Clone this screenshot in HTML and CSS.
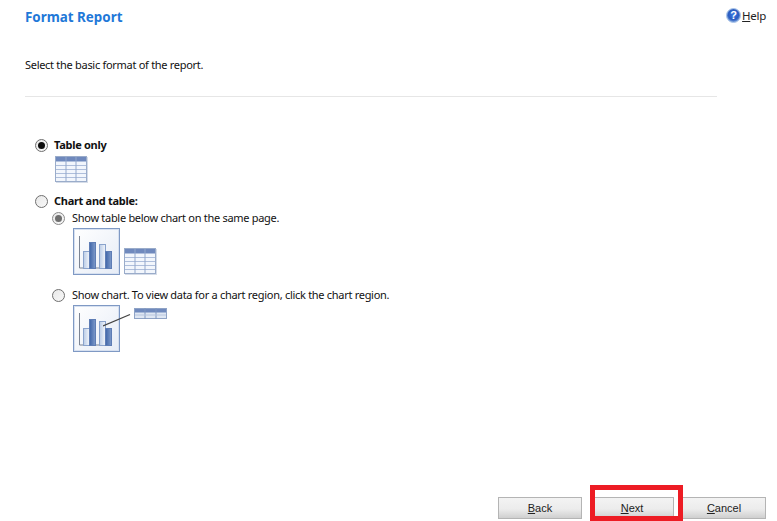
FILE: index.html
```html
<!DOCTYPE html>
<html lang="en">
<head>
<meta charset="utf-8">
<title>Format Report</title>
<link rel="stylesheet" href="styles.css">
</head>
<body>
<div class="page">
  <header class="head">
    <h1 class="title">Format Report</h1>
    <a class="help"><svg class="help-icon" width="15" height="15" viewBox="0 0 15 15"><defs><radialGradient id="hg" cx="50%" cy="45%" r="55%"><stop offset="0" stop-color="#3a78e4"/><stop offset="0.65" stop-color="#2a5cc0"/><stop offset="1" stop-color="#8fb2e2"/></radialGradient></defs><circle cx="7.5" cy="7.5" r="7" fill="url(#hg)" stroke="#a9c4e8"/><text x="7.5" y="11.3" text-anchor="middle" class="help-q">?</text></svg><span><u>H</u>elp</span></a>
  </header>
  <p class="intro">Select the basic format of the report.</p>
  <hr class="rule">
  <div class="options">
    <div class="opt opt-first">
      <label class="row"><span class="radio on"></span><b>Table only</b></label>
      <svg class="pic-table" width="33" height="27" viewBox="0 0 33 27"><use href="#tbl"/></svg>
    </div>
    <div class="opt opt-chart">
      <label class="row"><span class="radio"></span><b>Chart and table:</b></label>
      <div class="sub">
        <label class="row"><span class="radio on gray"></span>Show table below chart on the same page.</label>
        <div class="pics">
          <svg width="47" height="47" viewBox="0 0 47 47"><use href="#chart"/></svg>
          <svg class="pic-side" width="33" height="27" viewBox="0 0 33 27"><use href="#tbl"/></svg>
        </div>
      </div>
      <div class="sub sub-second">
        <label class="row"><span class="radio"></span>Show chart. To view data for a chart region, click the chart region.</label>
        <div class="pics pics-link">
          <svg width="47" height="47" viewBox="0 0 47 47"><use href="#chart"/></svg>
          <svg class="pic-line" width="32" height="24" viewBox="0 0 32 24"><path d="M0 21L27 9.500" stroke="#444" stroke-width="1.300" fill="none"/></svg>
          <svg class="pic-mini" width="33" height="11" viewBox="0 0 33 11"><rect x=".5" y=".5" width="32" height="10" fill="#dfe7f3" stroke="#8fa3c6"/><rect x="1" y="1" width="31" height="3.500" fill="#6f89bd"/><path d="M11 0v11M22 0v11" stroke="#7f96bf"/><path d="M1 7h31" stroke="#b7c5de"/></svg>
        </div>
      </div>
    </div>
  </div>
  <footer class="foot">
    <button class="btn"><u>B</u>ack</button>
    <span class="next-wrap"><button class="btn"><u>N</u>ext</button><span class="mark"></span></span>
    <button class="btn"><u>C</u>ancel</button>
  </footer>
</div>
<svg class="defs" width="0" height="0">
  <defs>
    <linearGradient id="bd" x1="0" x2="1" y1="0" y2="0"><stop offset="0" stop-color="#3f65a8"/><stop offset="1" stop-color="#7f9bca"/></linearGradient>
    <linearGradient id="bl" x1="0" x2="1" y1="0" y2="0"><stop offset="0" stop-color="#b9cbe6"/><stop offset="1" stop-color="#f3f6fb"/></linearGradient>
    <linearGradient id="pg" x1="0" x2="1" y1="0" y2="1"><stop offset="0" stop-color="#ffffff"/><stop offset="1" stop-color="#e6ecf6"/></linearGradient>
    <g id="tbl">
      <rect x=".5" y=".5" width="31" height="25" fill="#f2f6fc" stroke="#9aacca"/>
      <rect x="1" y="1" width="30" height="4.500" fill="#6f89bd"/>
      <path d="M1 9.500h30M1 13.500h30M1 17.500h30M1 21.500h30" stroke="#aebedb"/>
      <path d="M11 1v24M21 1v24" stroke="#93a8cc"/>
      <path d="M1 26.500h32M32.500 1v26" stroke="#d5dce8"/>
    </g>
    <g id="chart">
      <rect x=".5" y=".5" width="46" height="46" fill="url(#pg)" stroke="#7f99c4"/>
      <rect x="1.500" y="1.500" width="44" height="44" fill="none" stroke="#d6e0f0"/>
      <path d="M6.500 8v32h32" stroke="#7b8494" fill="none"/>
      <rect x="10.500" y="23.500" width="6" height="17" fill="url(#bl)" stroke="#8aa3cc"/>
      <rect x="16.500" y="14.500" width="6" height="26" fill="url(#bd)" stroke="#5e7db5"/>
      <rect x="26.500" y="16.500" width="6" height="24" fill="url(#bl)" stroke="#8aa3cc"/>
      <rect x="32.500" y="23.500" width="6" height="17" fill="url(#bd)" stroke="#5e7db5"/>
    </g>
  </defs>
</svg>
</body>
</html>
```
FILE: styles.css
```css
* { box-sizing: border-box; }
html, body { margin: 0; height: 100%; background: #fff; }
body { font-family: "Noto Sans", "Open Sans", sans-serif; font-size: 11px; letter-spacing: -0.29px; color: #111; overflow: hidden; }
.defs { position: absolute; }
.page { height: 521px; display: flex; flex-direction: column; padding-left: 25px; }
.head { display: flex; justify-content: space-between; align-items: flex-start; padding: 8px 11px 0 0; height: 57px; }
.title { margin: 0; font-size: 13.4px; letter-spacing: 0; line-height: 18px; font-weight: 700; color: #1f78d8; }
.help { display: flex; align-items: center; gap: 1px; font-size: 11.5px; line-height: 14px; color: #222; }
.help-q { font: 700 11px "Liberation Sans", sans-serif; fill: #fff; }
.intro { margin: 0; line-height: 16px; height: 39px; }
.rule { margin: 0 60px 0 0; border: 0; border-top: 1px solid #e6e6e6; height: 1px; }
.options { padding: 40px 0 0 10px; flex: 1; }
.row { display: flex; align-items: center; gap: 6px; line-height: 16px; height: 16px; }
.row b { font-weight: 700; }
.radio { width: 13px; height: 13px; border-radius: 50%; border: 1px solid #6f6f6f; background: linear-gradient(135deg, #e8e8e8, #f8f8f8); display: flex; align-items: center; justify-content: center; flex: none; }
.radio.on::after { content: ""; width: 7px; height: 7px; border-radius: 50%; background: #0d0d0d; }
.radio.gray { border-color: #8a8a8a; }
.radio.gray::after { background: #6e6e6e; }
.pic-table { display: block; margin: 3px 0 0 20px; }
.opt-chart { margin-top: 10px; }
.sub { margin: 1px 0 0 17px; }
.sub .row { gap: 7px; }
.sub-second { margin-top: 12px; }
.pics { display: flex; align-items: flex-end; margin: 2px 0 0 21px; gap: 4px; }
.pics svg { display: block; }
.pics-link { position: relative; margin-top: 2px; align-items: flex-start; gap: 0; }
.pic-line { position: absolute; left: 30px; top: 0; }
.pic-mini { position: absolute; left: 61px; top: 3px; }
.foot { display: flex; justify-content: flex-end; gap: 8px; padding: 0 11px 2px 0; }
.next-wrap { position: relative; display: flex; }
.btn { width: 84px; height: 22px; padding: 0; border: 1px solid #b4b4b4; background: linear-gradient(#f3f3f3 0%, #ececec 55%, #dcdcdc 80%, #cfcfcf 100%); font: 11px "Liberation Sans", sans-serif; letter-spacing: 0; color: #222; }
.mark { position: absolute; left: 0; right: -9px; top: -12px; bottom: -2px; border: 5px solid #ed1c24; }
```
